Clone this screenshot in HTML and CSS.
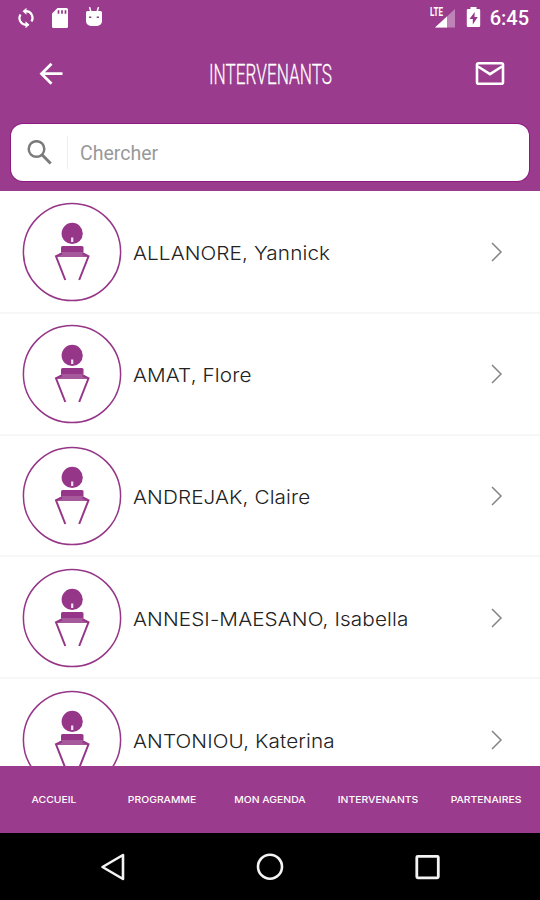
FILE: index.html
```html
<!DOCTYPE html>
<html lang="fr">
<head>
    <meta charset="UTF-8">
    <meta name="viewport" content="width=device-width, initial-scale=1.0">
    <title>Intervenants</title>
    <link rel="stylesheet" href="styles.css">
</head>
<body>
    <svg class="symbols" width="0" height="0">
        <symbol id="avatar" viewBox="0 0 100 100">
            <circle cx="50" cy="50" r="48.6" fill="#fff" stroke="#953688" stroke-width="1.5"/>
            <circle cx="50.2" cy="31.4" r="10.6" fill="#953688"/>
            <path d="M50.2 35.500v4.500" stroke="#f4e3f2" stroke-width="2.200"/>
            <rect x="39" y="44" width="22.500" height="7" rx="1.500" fill="#953688"/>
            <path d="M40 50h20.500l5.500 3.500v1.500H34.500v-1.500z" fill="#a65a9c"/>
            <path d="M40 51.500l-6 2.800L43.300 78M60.500 51.500l6 2.800L57.200 78" fill="none" stroke="#953688" stroke-width="2"/>
        </symbol>
        <symbol id="chevron" viewBox="0 0 12 20">
            <path d="M1 1l9 9-9 9" fill="none" stroke="#858585" stroke-width="1.500"/>
        </symbol>
    </svg>

    <div class="screen">
        <header class="header">
            <div class="status-bar">
                <div class="status-left">
                    <svg width="18" height="22" viewBox="0 0 18 22">
                        <path d="M9 4.200a6.700 6.700 0 0 1 5.500 10.300M9 17.800A6.700 6.700 0 0 1 3.500 7.500" fill="none" stroke="#fff" stroke-width="2.200"/>
                        <path d="M9.500.8v7L5.500 4.300zM8.500 14.200v7l4-3.500z" fill="#fff"/>
                    </svg>
                    <svg width="18" height="22" viewBox="0 0 18 22">
                        <path d="M6.500 1H15.500a1.500 1.500 0 0 1 1.500 1.500v17a1.500 1.500 0 0 1-1.500 1.500h-13A1.500 1.500 0 0 1 1 19.500V6.500z" fill="#fff"/>
                        <path d="M7.500 3.300v3.500M11 3.300v3.500M14.500 3.300v3.500" stroke="#953688" stroke-width="1.700"/>
                    </svg>
                    <svg width="18" height="22" viewBox="0 0 18 22">
                        <path d="M4.500 0l1.500 5M13.500 0L12 5" stroke="#fff" stroke-width="1.500"/>
                        <path d="M2.500 4h13A1.500 1.500 0 0 1 17 5.500V14a5 5 0 0 1-5 5H6a5 5 0 0 1-5-5V5.500A1.500 1.500 0 0 1 2.500 4z" fill="#fff"/>
                        <path d="M4 10.300h2.300M11.700 10.300h2.300" stroke="#7b4b76" stroke-width="1.600"/>
                    </svg>
                </div>
                <div class="status-right">
                    <div class="signal">
                        <svg width="26" height="24" viewBox="0 0 26 24">
                            <path d="M25 3v18.500H5z" fill="#c083b8"/>
                            <path d="M17 10.400v11.100H5z" fill="#fff"/>
                        </svg>
                        <span class="signal-type">LTE</span>
                    </div>
                    <svg class="battery" width="15" height="22" viewBox="0 0 15 22">
                        <path d="M4.500 0h6v2H13a1.200 1.200 0 0 1 1.200 1.200v15.600A1.200 1.200 0 0 1 13 20H2A1.200 1.200 0 0 1 .8 18.800V3.200A1.200 1.200 0 0 1 2 2h2.500z" fill="#fff"/>
                        <path d="M8.700 5L3.500 12h3.300v5.500L11.700 10H8.500z" fill="#953688"/>
                    </svg>
                    <span class="clock">6:45</span>
                </div>
            </div>
            <div class="title-bar">
                <svg class="back" width="26" height="26" viewBox="0 0 26 26">
                    <path d="M24.500 12.700H3.500M13.500 2.700l-10 10 10 10" fill="none" stroke="#fff" stroke-width="2.800"/>
                </svg>
                <h1 class="title">INTERVENANTS</h1>
                <svg class="mail" width="30" height="24" viewBox="0 0 30 24">
                    <rect x="2" y="1.300" width="26" height="20.400" rx="1.500" fill="none" stroke="#fff" stroke-width="2.600"/>
                    <path d="M3 4.500l12 7.700 12-7.700" fill="none" stroke="#fff" stroke-width="2.600"/>
                </svg>
            </div>
            <div class="search-box">
                <svg width="26" height="26" viewBox="0 0 26 26">
                    <circle cx="9.500" cy="9" r="7.800" fill="none" stroke="#7b7b7b" stroke-width="2.500"/>
                    <path d="M15 14.800l8.700 8.700" stroke="#7b7b7b" stroke-width="3"/>
                </svg>
                <span class="placeholder">Chercher</span>
            </div>
        </header>

        <main class="speaker-list">
            <div class="speaker">
                <svg class="avatar"><use href="#avatar"/></svg>
                <span class="name">ALLANORE, Yannick</span>
                <svg class="chevron"><use href="#chevron"/></svg>
            </div>
            <div class="speaker">
                <svg class="avatar"><use href="#avatar"/></svg>
                <span class="name">AMAT, Flore</span>
                <svg class="chevron"><use href="#chevron"/></svg>
            </div>
            <div class="speaker">
                <svg class="avatar"><use href="#avatar"/></svg>
                <span class="name">ANDREJAK, Claire</span>
                <svg class="chevron"><use href="#chevron"/></svg>
            </div>
            <div class="speaker">
                <svg class="avatar"><use href="#avatar"/></svg>
                <span class="name">ANNESI-MAESANO, Isabella</span>
                <svg class="chevron"><use href="#chevron"/></svg>
            </div>
            <div class="speaker">
                <svg class="avatar"><use href="#avatar"/></svg>
                <span class="name">ANTONIOU, Katerina</span>
                <svg class="chevron"><use href="#chevron"/></svg>
            </div>
        </main>

        <nav class="tabs">
            <span class="tab">ACCUEIL</span>
            <span class="tab">PROGRAMME</span>
            <span class="tab">MON AGENDA</span>
            <span class="tab">INTERVENANTS</span>
            <span class="tab">PARTENAIRES</span>
        </nav>

        <div class="android-nav">
            <svg width="28" height="30" viewBox="0 0 28 30">
                <path d="M24 3v24L3.500 15z" fill="none" stroke="#f4f4f4" stroke-width="2.600" stroke-linejoin="round"/>
            </svg>
            <svg width="28" height="30" viewBox="0 0 28 30">
                <circle cx="14" cy="14.700" r="12" fill="none" stroke="#f4f4f4" stroke-width="2.600"/>
            </svg>
            <svg width="28" height="30" viewBox="0 0 28 30">
                <rect x="3.800" y="4.300" width="21.500" height="21.500" rx="1" fill="none" stroke="#f4f4f4" stroke-width="2.800"/>
            </svg>
        </div>
    </div>
</body>
</html>
```

FILE: styles.css
```css
body {
    margin: 0;
    font-family: Inter, 'Liberation Sans', sans-serif;
    background: #fff;
}
.symbols {
    display: block;
}
.screen {
    display: flex;
    flex-direction: column;
    width: 540px;
    height: 900px;
    overflow: hidden;
}
.header {
    flex: none;
    box-sizing: border-box;
    height: 191px;
    background: #9a3b8d;
    color: #fff;
}
.status-bar {
    display: flex;
    justify-content: space-between;
    height: 36px;
    padding: 0 11px 0 17px;
}
.status-left, .status-right {
    display: flex;
    align-items: center;
}
.status-left {
    gap: 16px;
    padding-bottom: 1px;
}
.signal {
    position: relative;
    height: 24px;
    margin-right: 10px;
}
.signal-type {
    position: absolute;
    left: 0;
    top: 1px;
    padding-right: 1px;
    background: #9a3b8d;
    font: 700 12px/11px Roboto, sans-serif;
    transform: scaleX(0.67);
    transform-origin: 0 0;
}
.battery {
    margin-right: 9px;
}
.clock {
    font: 500 20px/36px Roboto, sans-serif;
}
.title-bar {
    display: flex;
    align-items: center;
    justify-content: space-between;
    height: 75px;
    padding: 0 35px 0 38px;
}
.title {
    width: 122px;
    margin: 3px 0 0;
    font: 300 27px/30px Roboto, sans-serif;
    -webkit-text-stroke: 0.3px #fff;
    white-space: nowrap;
    transform: scaleX(0.636);
    transform-origin: 0 50%;
}
.search-box {
    display: flex;
    align-items: center;
    box-sizing: border-box;
    height: 57px;
    margin: 13px 11px 0;
    padding-left: 16px;
    background: #fff;
    border-radius: 12px;
    box-shadow: 0 0 0 1px #8d1a80;
}
.placeholder {
    margin-left: 14px;
    padding: 2px 0 0 12px;
    border-left: 1px solid #eee;
    color: #999;
    font: 400 19.5px/31px Roboto, sans-serif;
}
.speaker-list {
    flex: 1;
    min-height: 0;
    padding-top: 1px;
    overflow: hidden;
}
.speaker {
    display: flex;
    align-items: center;
    box-sizing: border-box;
    height: 121.8px;
    padding: 1px 37px 0 22px;
    border-bottom: 2px solid #f7f7f7;
}
.avatar {
    flex: none;
    width: 100px;
    height: 100px;
}
.name {
    flex: 1;
    margin-left: 11px;
    padding-top: 3px;
    color: #222;
    font-size: 19px;
    font-weight: 300;
    letter-spacing: 0.1px;
    white-space: nowrap;
    transform: scaleX(1.09);
    transform-origin: 0 50%;
}
.chevron {
    width: 12px;
    height: 20px;
}
.tabs {
    display: grid;
    grid-template-columns: repeat(5, 1fr);
    align-items: center;
    flex: none;
    height: 67px;
    background: #9a3b8d;
    color: #fff;
}
.tab {
    text-align: center;
    font-size: 9.2px;
    font-weight: 500;
    white-space: nowrap;
    transform: scaleX(1.13);
}
.android-nav {
    display: flex;
    align-items: center;
    justify-content: space-between;
    flex: none;
    box-sizing: border-box;
    height: 67px;
    padding: 0 99px;
    background: #000;
}
```
